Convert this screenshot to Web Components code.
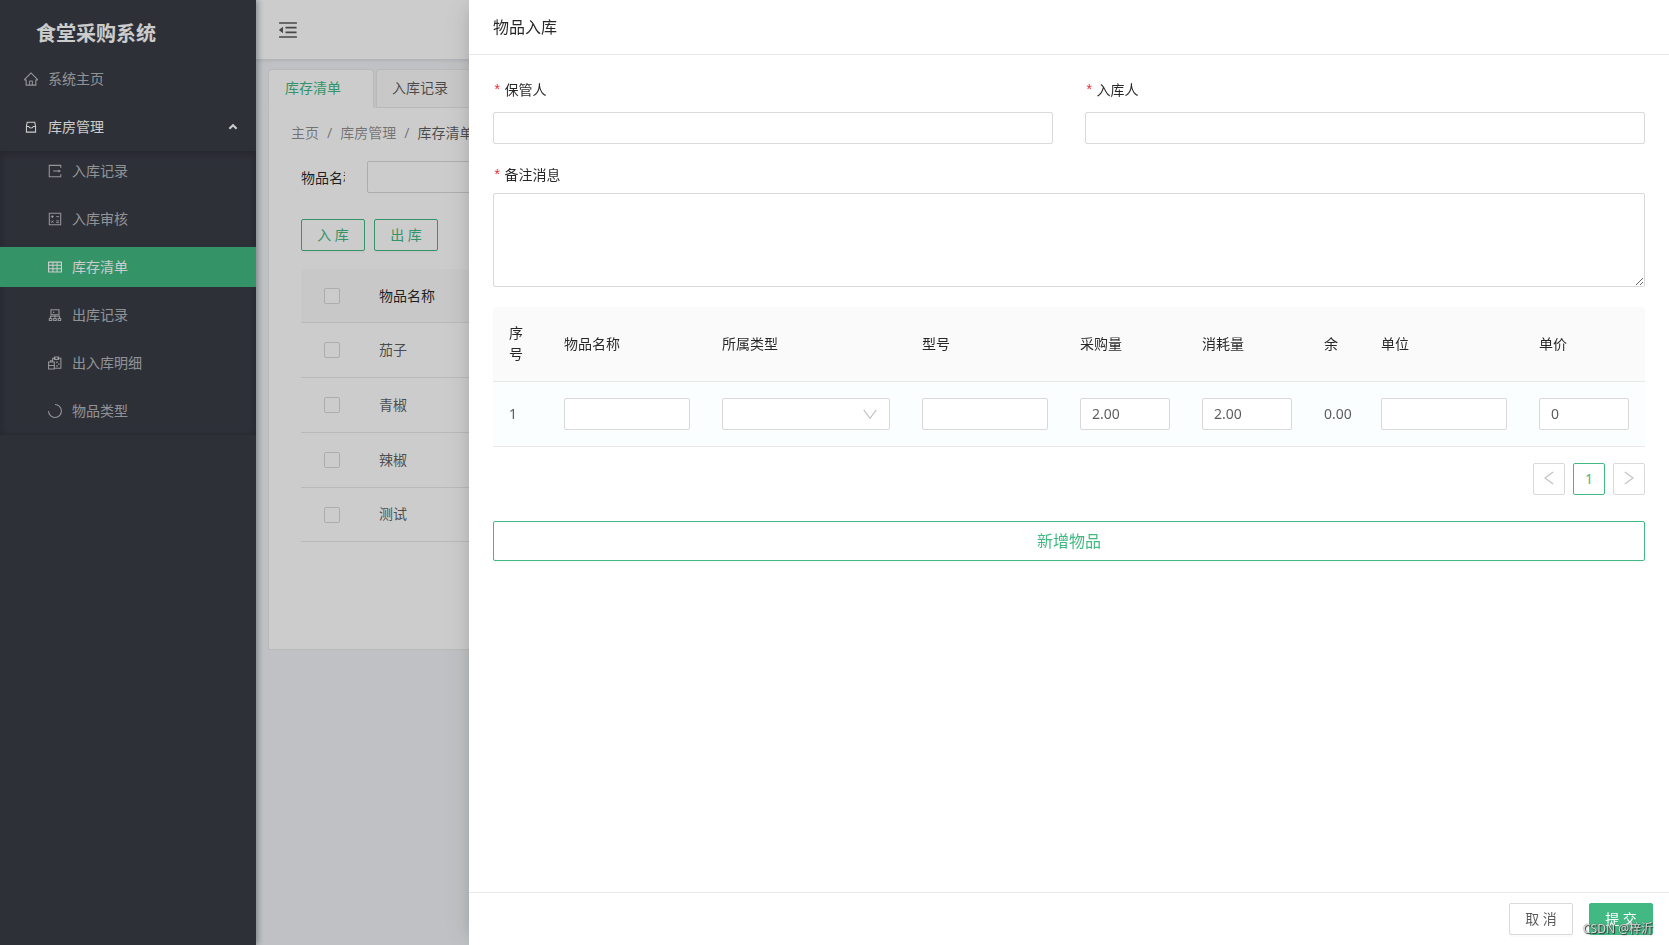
<!DOCTYPE html>
<html lang="zh-CN">
<head>
<meta charset="utf-8">
<title>食堂采购系统</title>
<style>
  html, body { height: 100%; }
  body {
    margin: 0;
    font: 14px/21px "Noto Sans", "Noto Sans CJK SC", sans-serif;
    color: rgba(0, 0, 0, .65);
    --green: #42b983;
    --line: #d9d9d9;
    --split: #e8e8e8;
    --heading: rgba(0, 0, 0, .85);
  }
</style>
</head>
<body>
<canteen-app></canteen-app>

<script>
const define = (name, html, setup) => {
  const template = document.createElement('template');
  template.innerHTML = html;
  customElements.define(name, class extends HTMLElement {
    constructor() {
      super();
      this.attachShadow({ mode: 'open' }).append(template.content.cloneNode(true));
    }
    connectedCallback() { if (setup) setup(this, this.shadowRoot); }
  });
};

const line = d => `<path d="${d}" fill="none" stroke="currentColor" stroke-width="68"/>`;
const fill = d => `<path d="${d}"/>`;
const ICONS = {
  home: fill('M946.5 505L534.2 92.9a31.5 31.5 0 0 0-44.4 0L77.5 505a63.9 63.9 0 0 0-18.8 46c.4 35.2 29.7 63.3 64.9 63.3h42.5V940h691.8V614.3h43.4c17.1 0 33.2-6.7 45.3-18.8a63.6 63.6 0 0 0 18.7-45.3c0-17-6.7-33.1-18.8-45.2zM568 868H456V664h112v204zm217.9-325.7V868H632V640c0-22.1-17.9-40-40-40H432c-22.1 0-40 17.9-40 40v228H238.1V542.3h-96l370-369.7 23.1 23.1L882 542.3h-96.1z'),
  store: line('M220 460L270 210h484l50 250v380H220zM220 480h150c20 130 264 130 284 0h150'),
  enter: line('M880 310V150H144v724h736V714') + line('M400 512h390') + fill('M740 410l150 102-150 102z'),
  audit: line('M148 148h728v728H148z') + `<path d="M250 360h180M340 270v180M590 360h180M270 610l140 140M410 610L270 750M590 630h180M590 740h180" fill="none" stroke="currentColor" stroke-width="58"/>`,
  table: fill('M928 160H96c-17.7 0-32 14.3-32 32v640c0 17.7 14.3 32 32 32h832c17.7 0 32-14.3 32-32V192c0-17.7-14.3-32-32-32zm-40 208H676V232h212v136zm0 224H676V432h212v160zM412 432h200v160H412V432zm200-64H412V232h200v136zm-476 64h212v160H136V432zm0-200h212v136H136V232zm0 424h212v136H136V656zm276 0h200v136H412V656zm476 136H676V656h212v136z'),
  cluster: line('M256 170h512v330H256zM512 500v180M220 700V590h584v110M148 730h160v130H148zM432 730h160v130H432zM716 730h160v130H716z') + fill('M380 300h80v80h-80z'),
  detail: line('M360 410V210h200M660 210h230v640H480M100 450h370v440H100zM100 670h370M220 450v-80h140') + line('M480 130h260v160H480z') + fill('M590 420h90v90h-90zM710 540h90v90h-90zM590 660h90v90h-90z'),
  ring: line('M512 100a412 412 0 1 1-412 412'),
  fold: fill('M408 442h480c4.4 0 8-3.6 8-8v-56c0-4.4-3.6-8-8-8H408c-4.4 0-8 3.6-8 8v56c0 4.4 3.6 8 8 8zm-8 204c0 4.4 3.6 8 8 8h480c4.4 0 8-3.6 8-8v-56c0-4.4-3.6-8-8-8H408c-4.4 0-8 3.6-8 8v56zm504-486H120c-4.4 0-8 3.6-8 8v56c0 4.4 3.6 8 8 8h784c4.4 0 8-3.6 8-8v-56c0-4.4-3.6-8-8-8zm0 632H120c-4.4 0-8 3.6-8 8v56c0 4.4 3.6 8 8 8h784c4.4 0 8-3.6 8-8v-56c0-4.4-3.6-8-8-8zM115.4 518.9L271.7 642c5.8 4.6 14.4.5 14.4-6.9V388.9c0-7.4-8.5-11.5-14.4-6.9L115.4 505.1a8.74 8.74 0 0 0 0 13.8z'),
  up: `<path d="M190 660L512 350l322 310" fill="none" stroke="currentColor" stroke-width="190"/>`,
  down: line('M110 250l402 540 402-540'),
  left: line('M780 130L250 512l530 382'),
  right: line('M244 130l530 382-530 382')
};

define('ui-icon', `
  <style>
    :host { display: block; width: 14px; height: 14px; flex: none; }
    svg { display: block; width: 100%; height: 100%; fill: currentColor; }
  </style>
  <svg viewBox="64 64 896 896" aria-hidden="true"></svg>`,
  (el, root) => { root.querySelector('svg').innerHTML = ICONS[el.getAttribute('name')] || ''; });

define('ui-button', `
  <style>
    :host { display: block; }
    button {
      box-sizing: border-box; width: 100%; height: 32px; padding: 0 15px 2px; display: grid; place-items: center;
      font: inherit; color: inherit; background: #fff;
      border: 1px solid var(--line); border-radius: 2px; box-shadow: 0 2px 0 rgba(0, 0, 0, .02);
    }
    :host([kind="outline"]) button { color: var(--green); border-color: var(--green); }
    :host([kind="primary"]) button { color: #fff; background: var(--green); border-color: var(--green); }
    :host([kind="page"]) button { width: 32px; padding: 0 0 2px; box-shadow: none; color: rgba(0, 0, 0, .25); }
    :host([current]) button { color: var(--green) !important; border-color: var(--green); }
    :host([large]) button { height: 40px; padding-bottom: 0; font-size: 16px; }
  </style>
  <button type="button"><slot></slot></button>`,
  (el, root) => { if (el.title) root.querySelector('button').setAttribute('aria-label', el.title); });

define('ui-field', `
  <style>
    :host { display: block; min-width: 0; }
    label { display: block; color: var(--heading); margin-bottom: var(--label-gap, 6px); line-height: 22px; }
    label:empty { display: none; }
    label::before { content: "*"; color: #f5222d; margin-right: 3px; font-family: "Liberation Mono", monospace; }
    input, textarea, select {
      box-sizing: border-box; display: block; width: 100%; height: 32px; margin: 0; padding: 3px 11px 5px;
      font: inherit; color: inherit; background: #fff; border: 1px solid var(--line); border-radius: 2px;
      outline: 0; appearance: none; grid-area: 1 / 1;
    }
    textarea { height: 94px; resize: vertical; }
    div { display: grid; align-items: center; }
    ui-icon { grid-area: 1 / 1; justify-self: end; margin-right: 13px; color: #bfbfbf; pointer-events: none; }
  </style>
  <label for="control"></label><div></div>`,
  (el, root) => {
    const tag = el.getAttribute('type') || 'input';
    const control = document.createElement(tag);
    control.id = 'control';
    if (el.hasAttribute('value')) control.value = el.getAttribute('value');
    if (el.hasAttribute('name')) control.setAttribute('aria-label', el.getAttribute('name'));
    root.querySelector('label').textContent = el.getAttribute('label') || '';
    const box = root.querySelector('div');
    box.replaceChildren(control);
    if (tag === 'select') {
      const arrow = document.createElement('ui-icon');
      arrow.setAttribute('name', 'down');
      box.append(arrow);
    }
  });

define('menu-item', `
  <style>
    :host { display: block; color: rgba(255, 255, 255, .65); }
    a {
      display: flex; align-items: center; gap: 10px; height: 40px; padding: 0 16px 0 24px;
      color: inherit; text-decoration: none;
    }
    span { padding-bottom: 2px; }
    :host([sub]) a { padding-left: 48px; }
    :host([open]) { color: #fff; }
    :host([active]) { color: #fff; background: var(--green); }
    .arrow { width: 10px; height: 10px; margin: 0 2px 0 auto; }
  </style>
  <a href="#"><span><slot></slot></span></a>`,
  (el, root) => {
    const link = root.querySelector('a');
    const icon = (name, className) => {
      const node = document.createElement('ui-icon');
      node.setAttribute('name', name);
      node.className = className;
      return node;
    };
    link.prepend(icon(el.getAttribute('icon'), 'lead'));
    if (el.hasAttribute('open')) link.append(icon('up', 'arrow'));
  });

define('app-sidebar', `
  <style>
    :host { display: block; background: #3a3d47; box-shadow: 2px 0 6px rgba(0, 21, 41, .35); z-index: 1; }
    h1 { margin: 0; padding: 19px 36px 10px; font-size: 20px; line-height: 30px; font-weight: 700; color: #fff; }
    nav { display: grid; gap: 8px; }
    .sub { display: grid; gap: 8px; padding-bottom: 4px; margin-top: -4px;
      box-shadow: inset 0 2px 8px rgba(0, 0, 0, .25); }
  </style>
  <h1>食堂采购系统</h1>
  <nav>
    <menu-item icon="home">系统主页</menu-item>
    <menu-item icon="store" open>库房管理</menu-item>
    <div class="sub">
      <menu-item sub icon="enter">入库记录</menu-item>
      <menu-item sub icon="audit">入库审核</menu-item>
      <menu-item sub icon="table" active>库存清单</menu-item>
      <menu-item sub icon="cluster">出库记录</menu-item>
      <menu-item sub icon="detail">出入库明细</menu-item>
      <menu-item sub icon="ring">物品类型</menu-item>
    </div>
  </nav>`);

define('app-header', `
  <style>
    :host { display: flex; align-items: center; height: 59px; padding: 0 22px; background: #fff;
      box-shadow: 0 1px 4px rgba(0, 21, 41, .12); }
    button { padding: 0; border: 0; background: none; color: rgba(0, 0, 0, .65); }
    ui-icon { width: 20px; height: 20px; }
  </style>
  <button type="button" aria-label="收起菜单"><ui-icon name="fold"></ui-icon></button>`);

define('stock-table', `
  <style>
    :host { display: block; }
    table { width: 100%; border-collapse: separate; border-spacing: 0; table-layout: fixed; }
    th, td { box-sizing: border-box; height: 55px; padding: 0 16px 2px; text-align: left; font-weight: 400;
      border-bottom: 1px solid var(--split); }
    th { height: 54px; padding-bottom: 0; color: var(--heading); background: #fafafa; }
    tr:last-child td { height: 54px; }
    tr > :first-child { width: 62px; padding: 0 0 0 23px; }
    input { display: block; box-sizing: border-box; width: 16px; height: 16px; margin: 0; appearance: none;
      background: #fff; border: 1px solid var(--line); border-radius: 2px; }
  </style>
  <table>
    <thead><tr><th><input type="checkbox" aria-label="全选"></th><th>物品名称</th></tr></thead>
    <tbody></tbody>
  </table>`,
  (el, root) => {
    root.querySelector('tbody').innerHTML = ['茄子', '青椒', '辣椒', '测试'].map(name =>
      `<tr><td><input type="checkbox" aria-label="${name}"></td><td>${name}</td></tr>`).join('');
  });

define('stock-page', `
  <style>
    :host { display: block; padding: 10px 12px; }
    .tabs { display: flex; gap: 2px; }
    .tabs a { box-sizing: border-box; height: 39px; padding: 7px 15px; color: inherit; text-decoration: none;
      border: 1px solid var(--split); border-radius: 4px 4px 0 0; background: #fafafa; }
    .tabs a.on { width: 106px; padding-left: 16px; color: var(--green); background: #fff; border-bottom-color: #fff; }
    .tabs a:last-of-type { flex: 1; border-right: 0; }
    .card { box-sizing: border-box; min-height: 542px; padding: 14px 32px; background: #fff;
      border: 1px solid var(--split); border-top: 0; }
    .crumbs { display: flex; gap: 8px; margin-left: -10px; color: rgba(0, 0, 0, .45); }
    .crumbs a { color: inherit; text-decoration: none; }
    .crumbs b { font-weight: 400; color: rgba(0, 0, 0, .65); }
    .search { display: flex; align-items: center; gap: 22px; margin: 18px 0 26px; }
    .search label { width: 44px; overflow: hidden; white-space: nowrap; color: var(--heading); }
    .search input { box-sizing: border-box; width: 280px; height: 32px; border: 1px solid var(--line);
      border-radius: 2px; background: #fff; }
    .actions { display: flex; gap: 9px; margin-bottom: 18px; }
    .actions ui-button { width: 64px; }
  </style>
  <nav class="tabs"><a class="on" href="#">库存清单</a><a href="#">入库记录</a></nav>
  <div class="card">
    <nav class="crumbs"><a href="#">主页</a><span>/</span><a href="#">库房管理</a><span>/</span><b>库存清单</b></nav>
    <div class="search"><label for="q">物品名称</label><input id="q"></div>
    <div class="actions"><ui-button kind="outline">入 库</ui-button><ui-button kind="outline">出 库</ui-button></div>
    <stock-table></stock-table>
  </div>`);

define('entry-table', `
  <style>
    :host { display: block; }
    table { width: 100%; table-layout: fixed; border-collapse: separate; border-spacing: 0; }
    th, td { padding: 16px; text-align: left; font-weight: 400; border-bottom: 1px solid var(--split); }
    th { padding: 15px 16px 17px; color: var(--heading); background: #fafafa; }
    th:first-child { border-top-left-radius: 4px; }
    th:last-child { border-top-right-radius: 4px; }
    td { background: #fafeff; }
    td.plain { padding: 16px 0 18px 16px; }
    .no { width: 55px; } .text { width: 158px; } .kind { width: 200px; } .num { width: 122px; } .left { width: 57px; }
  </style>
  <table>
    <colgroup><col class="no"><col class="text"><col class="kind"><col class="text"><col class="num"><col class="num"><col class="left"><col class="text"><col class="num"></colgroup>
    <thead><tr><th>序号</th><th>物品名称</th><th>所属类型</th><th>型号</th><th>采购量</th><th>消耗量</th><th>余</th><th>单位</th><th>单价</th></tr></thead>
    <tbody><tr>
      <td class="plain">1</td>
      <td><ui-field name="物品名称"></ui-field></td>
      <td><ui-field type="select" name="所属类型"></ui-field></td>
      <td><ui-field name="型号"></ui-field></td>
      <td><ui-field name="采购量" value="2.00"></ui-field></td>
      <td><ui-field name="消耗量" value="2.00"></ui-field></td>
      <td class="plain">0.00</td>
      <td><ui-field name="单位"></ui-field></td>
      <td><ui-field name="单价" value="0"></ui-field></td>
    </tr></tbody>
  </table>`);

define('entry-drawer', `
  <style>
    :host { display: flex; flex-direction: column; background: #fff;
      box-shadow: -6px 0 16px -8px rgba(0, 0, 0, .16), -9px 0 28px rgba(0, 0, 0, .05); }
    h2 { margin: 0; padding: 16px 24px; font-size: 16px; line-height: 22px; font-weight: 400; color: var(--heading);
      border-bottom: 1px solid var(--split); }
    main { flex: 1; padding: 24px; }
    .pair { display: grid; grid-template-columns: 1fr 1fr; gap: 32px; margin-bottom: 20px; --label-gap: 10px; }
    entry-table { margin: 20px 0 16px; }
    .pager { display: flex; justify-content: flex-end; gap: 8px; margin-bottom: 26px; }
    footer { display: flex; justify-content: flex-end; gap: 16px; padding: 10px 16px; border-top: 1px solid var(--split); }
    footer ui-button { width: 64px; }
    .mark { position: absolute; right: 16px; bottom: 6px; font-size: 12px; line-height: 20px;
      color: rgba(255, 255, 255, .8); text-shadow: 0 0 1px #333, 1px 1px 1px #333; }
  </style>
  <h2>物品入库</h2>
  <main>
    <div class="pair"><ui-field label="保管人"></ui-field><ui-field label="入库人"></ui-field></div>
    <ui-field label="备注消息" type="textarea"></ui-field>
    <entry-table></entry-table>
    <div class="pager">
      <ui-button kind="page" title="上一页"><ui-icon name="left"></ui-icon></ui-button>
      <ui-button kind="page" current>1</ui-button>
      <ui-button kind="page" title="下一页"><ui-icon name="right"></ui-icon></ui-button>
    </div>
    <ui-button kind="outline" large>新增物品</ui-button>
  </main>
  <footer><ui-button>取 消</ui-button><ui-button kind="primary">提 交</ui-button></footer>
  <span class="mark">CSDN @梓沂</span>`);

define('canteen-app', `
  <style>
    :host { display: grid; grid-template-columns: 256px minmax(0, 1fr); min-height: 100%; background: #f0f2f5; }
    .mask { position: fixed; inset: 0; z-index: 2; background: rgba(0, 0, 0, .2); }
    entry-drawer { position: fixed; inset: 0 0 0 469px; z-index: 3; }
  </style>
  <app-sidebar></app-sidebar>
  <div><app-header></app-header><stock-page></stock-page></div>
  <div class="mask"></div>
  <entry-drawer></entry-drawer>`);
</script>
</body>
</html>
